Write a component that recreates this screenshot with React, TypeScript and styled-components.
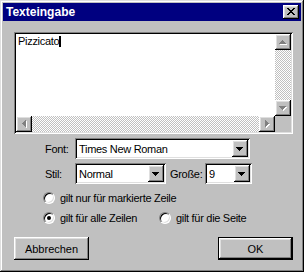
import React from 'react';
import styled, { createGlobalStyle } from 'styled-components';

const Global = createGlobalStyle`
  html, body { margin: 0; padding: 0; background: #c0c0c0; }
  body {
    width: 304px; height: 272px; overflow: hidden;
    font-family: "Liberation Sans", Arial, sans-serif; font-size: 11px; color: #000;
  }
`;

const raisedShadow = 'inset -1px -1px #000, inset 1px 1px #fff, inset -2px -2px #808080, inset 2px 2px #dfdfdf';
const sunkenShadow = 'inset 1px 1px #808080, inset -1px -1px #fff, inset 2px 2px #000, inset -2px -2px #dfdfdf';

const Window = styled.div`
  width: 304px; height: 272px; box-sizing: border-box; padding: 3px;
  background: #c0c0c0;
  box-shadow: inset -1px -1px #000, inset 1px 1px #dfdfdf, inset -2px -2px #808080, inset 2px 2px #fff;
  display: flex; flex-direction: column;
`;

const TitleBar = styled.div`
  height: 18px; background: #000080; color: #fff;
  display: flex; align-items: center; justify-content: space-between;
  padding: 0 2px 0 3px;
  font-weight: bold; font-size: 12px;
`;

const CloseBtn = styled.div`
  width: 16px; height: 14px; background: #c0c0c0; box-shadow: ${raisedShadow};
  display: flex; align-items: center; justify-content: center;
  svg { display: block; margin: 0 1px 1px 0; }
`;

const Body = styled.div`
  flex: 1; display: flex; flex-direction: column;
  padding: 11px 8px 0 11px;
  letter-spacing: -0.3px;
`;

const Field = styled.div`
  width: 279px; height: 102px; box-sizing: border-box; padding: 2px;
  box-shadow: ${sunkenShadow}; background: #fff;
  display: grid; grid-template-columns: 1fr 16px; grid-template-rows: 1fr 16px;
`;

const TextArea = styled.div`
  background: #fff; padding: 1px 2px; line-height: 13px;
  display: flex; align-items: flex-start;
`;

const Caret = styled.span`
  display: inline-block; width: 2px; height: 11px; background: #000; margin-top: 1px;
`;

const Track = styled.div<{ $vertical?: boolean }>`
  display: flex; flex-direction: ${p => (p.$vertical ? 'column' : 'row')};
  justify-content: space-between;
  background: repeating-conic-gradient(#c0c0c0 0% 25%, #fff 0% 50%) 0 0 / 2px 2px;
`;

const ScrollBtn = styled.div`
  width: 16px; height: 16px; box-sizing: border-box; background: #c0c0c0;
  box-shadow: ${raisedShadow};
  display: flex; align-items: center; justify-content: center;
  svg { display: block; }
`;

const Corner = styled.div`
  background: #c0c0c0;
`;

const Form = styled.div`
  margin-top: 4px; padding-left: 31px;
  display: flex; flex-direction: column; gap: 4px;
`;

const Row = styled.div`
  display: flex; align-items: center; height: 21px;
`;

const Label = styled.span<{ $w?: number; $ml?: number }>`
  width: ${p => (p.$w ? `${p.$w}px` : 'auto')};
  margin-left: ${p => p.$ml ?? 0}px;
  white-space: nowrap;
`;

const Combo = styled.div<{ $w: number }>`
  width: ${p => p.$w}px; height: 21px; box-sizing: border-box; padding: 2px;
  background: #fff; box-shadow: ${sunkenShadow};
  display: flex; align-items: center;
`;

const ComboText = styled.span`
  flex: 1; padding-left: 2px; white-space: nowrap; overflow: hidden;
`;

const DropBtn = styled.div`
  width: 16px; height: 17px; background: #c0c0c0; box-shadow: ${raisedShadow};
  display: flex; align-items: center; justify-content: center;
  svg { display: block; }
`;

const Radios = styled.div`
  margin-top: 7px; padding-left: 29px;
  display: flex; flex-direction: column; gap: 7px;
`;

const RadioRow = styled.div`
  display: flex; align-items: center; height: 13px;
`;

const RadioItem = styled.label<{ $w?: number }>`
  display: flex; align-items: center; gap: 5px;
  width: ${p => (p.$w ? `${p.$w}px` : 'auto')};
  white-space: nowrap;
`;

const RadioCircle = styled.span<{ $checked?: boolean }>`
  position: relative; width: 12px; height: 12px; box-sizing: border-box; flex: none;
  border-radius: 50%; background: #fff;
  border: 1px solid; border-color: #808080 #fff #fff #808080;
  box-shadow: inset 1px 1px #000, inset -1px -1px #dfdfdf;
  &::after {
    content: ''; position: absolute; left: 3px; top: 3px; width: 4px; height: 4px;
    border-radius: 50%; background: #000;
    display: ${p => (p.$checked ? 'block' : 'none')};
  }
`;

const Buttons = styled.div`
  margin-top: 13px; display: flex; justify-content: space-between;
`;

const PushButton = styled.div<{ $default?: boolean }>`
  width: 75px; height: 23px; box-sizing: border-box;
  display: flex; align-items: center; justify-content: center;
  background: #c0c0c0;
  border: ${p => (p.$default ? '1px solid #000' : 'none')};
  box-shadow: ${raisedShadow};
  letter-spacing: 0;
`;

type Dir = 'up' | 'down' | 'left' | 'right';

function triRects(dir: Dir, color: string, ox: number, oy: number) {
  return [0, 1, 2, 3].map(i => {
    let x = 0, y = 0, w = 1, h = 1;
    if (dir === 'down') { x = i; y = 2 + i; w = 7 - 2 * i; h = 1; }
    if (dir === 'up') { x = 3 - i; y = 2 + i; w = 1 + 2 * i; h = 1; }
    if (dir === 'left') { x = 2 + i; y = 3 - i; w = 1; h = 1 + 2 * i; }
    if (dir === 'right') { x = 5 - i; y = 3 - i; w = 1; h = 1 + 2 * i; }
    return <rect key={`${color}${i}`} x={x + ox} y={y + oy} width={w} height={h} fill={color} />;
  });
}

function Arrow({ dir, disabled }: { dir: Dir; disabled?: boolean }) {
  return (
    <svg width="8" height="8" viewBox="0 0 8 8" shapeRendering="crispEdges">
      {disabled && triRects(dir, '#fff', 1, 1)}
      {triRects(dir, disabled ? '#808080' : '#000', 0, 0)}
    </svg>
  );
}

function CloseGlyph() {
  const rows = ['XX....XX', '.XX..XX.', '..XXXX..', '...XX...', '..XXXX..', '.XX..XX.', 'XX....XX'];
  const rects: React.ReactNode[] = [];
  rows.forEach((r, y) =>
    r.split('').forEach((c, x) => {
      if (c === 'X') rects.push(<rect key={`${x}-${y}`} x={x} y={y} width={1} height={1} fill="#000" />);
    })
  );
  return (
    <svg width="8" height="7" viewBox="0 0 8 7" shapeRendering="crispEdges">
      {rects}
    </svg>
  );
}

function Radio({ checked, label, w }: { checked?: boolean; label: string; w?: number }) {
  return (
    <RadioItem $w={w}>
      <RadioCircle $checked={checked} />
      <span>{label}</span>
    </RadioItem>
  );
}

export default function App() {
  return (
    <>
      <Global />
      <Window>
        <TitleBar>
          <span>Texteingabe</span>
          <CloseBtn><CloseGlyph /></CloseBtn>
        </TitleBar>
        <Body>
          <Field>
            <TextArea>
              <span>Pizzicato</span>
              <Caret />
            </TextArea>
            <Track $vertical>
              <ScrollBtn><Arrow dir="up" disabled /></ScrollBtn>
              <ScrollBtn><Arrow dir="down" disabled /></ScrollBtn>
            </Track>
            <Track>
              <ScrollBtn><Arrow dir="left" disabled /></ScrollBtn>
              <ScrollBtn><Arrow dir="right" disabled /></ScrollBtn>
            </Track>
            <Corner />
          </Field>
          <Form>
            <Row>
              <Label $w={30}>Font:</Label>
              <Combo $w={175}>
                <ComboText>Times New Roman</ComboText>
                <DropBtn><Arrow dir="down" /></DropBtn>
              </Combo>
            </Row>
            <Row>
              <Label $w={30}>Stil:</Label>
              <Combo $w={91}>
                <ComboText>Normal</ComboText>
                <DropBtn><Arrow dir="down" /></DropBtn>
              </Combo>
              <Label $w={35} $ml={4}>Große:</Label>
              <Combo $w={47}>
                <ComboText>9</ComboText>
                <DropBtn><Arrow dir="down" /></DropBtn>
              </Combo>
            </Row>
          </Form>
          <Radios>
            <RadioRow>
              <Radio label="gilt nur für markierte Zeile" />
            </RadioRow>
            <RadioRow>
              <Radio checked label="gilt für alle Zeilen" w={116} />
              <Radio label="gilt für die Seite" />
            </RadioRow>
          </Radios>
          <Buttons>
            <PushButton>Abbrechen</PushButton>
            <PushButton $default>OK</PushButton>
          </Buttons>
        </Body>
      </Window>
    </>
  );
}
